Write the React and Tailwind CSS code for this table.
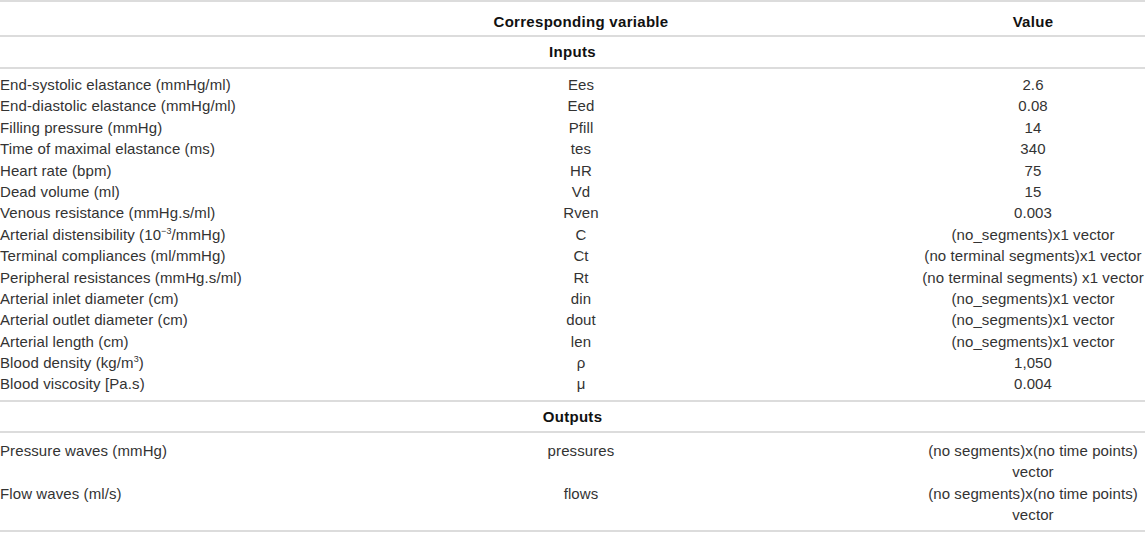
import React from "react";

const inputs = [
  ["End-systolic elastance (mmHg/ml)", "Ees", "2.6"],
  ["End-diastolic elastance (mmHg/ml)", "Eed", "0.08"],
  ["Filling pressure (mmHg)", "Pfill", "14"],
  ["Time of maximal elastance (ms)", "tes", "340"],
  ["Heart rate (bpm)", "HR", "75"],
  ["Dead volume (ml)", "Vd", "15"],
  ["Venous resistance (mmHg.s/ml)", "Rven", "0.003"],
  [
    <>
      Arterial distensibility (10<sup className="text-[9px] -top-[6px]">−3</sup>/mmHg)
    </>,
    "C",
    "(no_segments)x1 vector",
  ],
  ["Terminal compliances (ml/mmHg)", "Ct", "(no terminal segments)x1 vector"],
  ["Peripheral resistances (mmHg.s/ml)", "Rt", "(no terminal segments) x1 vector"],
  ["Arterial inlet diameter (cm)", "din", "(no_segments)x1 vector"],
  ["Arterial outlet diameter (cm)", "dout", "(no_segments)x1 vector"],
  ["Arterial length (cm)", "len", "(no_segments)x1 vector"],
  [
    <>
      Blood density (kg/m<sup className="text-[9px] -top-[6px]">3</sup>)
    </>,
    "ρ",
    "1,050",
  ],
  ["Blood viscosity [Pa.s)", "μ", "0.004"],
];

const outputs = [
  ["Pressure waves (mmHg)", "pressures"],
  ["Flow waves (ml/s)", "flows"],
];

function Row({ a, b, c }) {
  return (
    <div className="grid grid-cols-[241px_680px_224px] h-[21.4px] items-center leading-[21.4px]">
      <div className="whitespace-nowrap">{a}</div>
      <div className="text-center whitespace-nowrap">{b}</div>
      <div className="text-center whitespace-nowrap">{c}</div>
    </div>
  );
}

export default function App() {
  return (
    <div
      className="w-[1145px] h-[534px] bg-white text-[#333] text-[15px] tracking-[0.1px]"
      style={{ fontFamily: '"Liberation Sans", Arial, sans-serif' }}
    >
      <div className="border-t-2 border-[#dcdcdc]" />
      <div className="grid grid-cols-[241px_680px_224px] h-[35px] pt-[8px] items-center font-bold text-[#111] tracking-[0.3px] border-b-2 border-[#dcdcdc]">
        <div />
        <div className="text-center">Corresponding variable</div>
        <div className="text-center">Value</div>
      </div>
      <div className="h-[32px] pt-[1px] flex items-center justify-center font-bold text-[#111] tracking-[0.3px] border-b-2 border-[#dcdcdc]">
        Inputs
      </div>
      <div className="pt-[5px] pb-[5px] border-b-2 border-[#dcdcdc]">
        {inputs.map((r, i) => (
          <Row key={i} a={r[0]} b={r[1]} c={r[2]} />
        ))}
      </div>
      <div className="h-[31px] pt-[1px] flex items-center justify-center font-bold text-[#111] tracking-[0.3px] border-b-2 border-[#dcdcdc]">
        Outputs
      </div>
      <div className="pt-[7px] pb-[5px] border-b-2 border-[#dcdcdc]">
        {outputs.map((r, i) => (
          <div
            key={i}
            className="grid grid-cols-[241px_680px_224px] leading-[21.4px]"
          >
            <div className="whitespace-nowrap">{r[0]}</div>
            <div className="text-center whitespace-nowrap">{r[1]}</div>
            <div className="text-center whitespace-nowrap">
              (no segments)x(no time points)
              <br />
              vector
            </div>
          </div>
        ))}
      </div>
    </div>
  );
}
